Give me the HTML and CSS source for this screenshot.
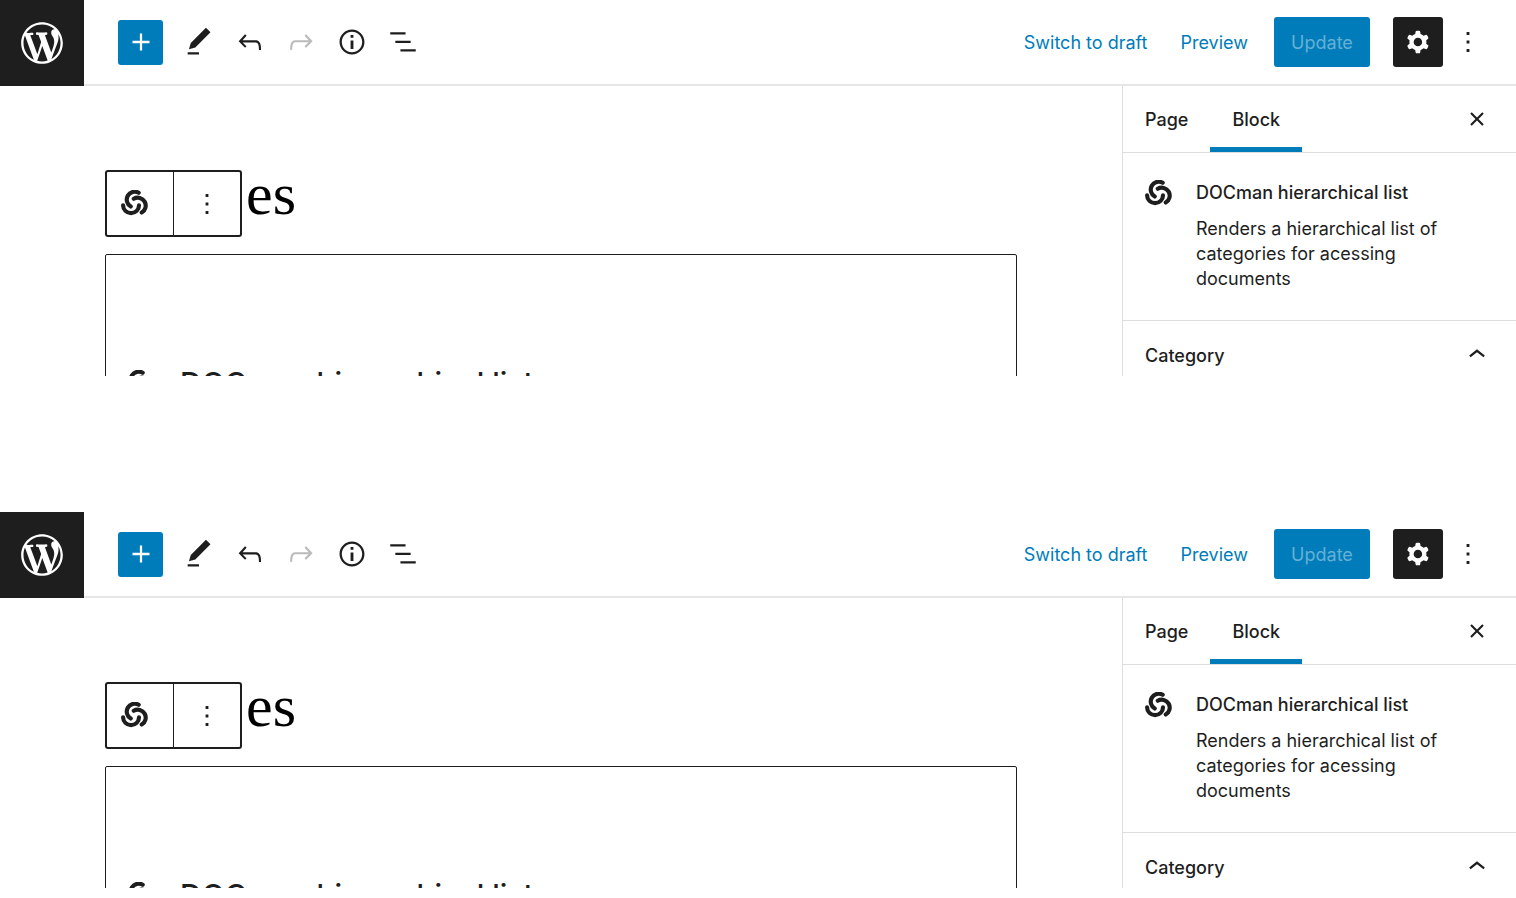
FILE: index.html
```html
<!DOCTYPE html>
<html lang="en">

<head>
    <meta charset="UTF-8">
    <meta name="viewport" content="width=device-width, initial-scale=1.0">
    <title>Edit Page</title>
    <link rel="stylesheet" href="styles.css">
</head>

<body>
    <!-- shared icons -->
    <svg class="sprite" aria-hidden="true">
        <symbol id="wordpress" viewBox="-2 -2 24 24">
            <path d="M20 10c0-5.51-4.49-10-10-10C4.48 0 0 4.49 0 10c0 5.52 4.48 10 10 10 5.51 0 10-4.48 10-10zM7.78 15.37L4.37 6.22c.55-.02 1.17-.08 1.17-.08.5-.06.44-1.13-.06-1.11 0 0-1.45.11-2.37.11-.18 0-.37 0-.58-.01C4.12 2.69 6.87 1.11 10 1.11c2.33 0 4.45.87 6.05 2.34-.68-.11-1.65.39-1.65 1.58 0 .74.45 1.36.9 2.1.35.61.55 1.36.55 2.46 0 1.49-1.4 5-1.4 5l-3.03-8.37c.54-.02.82-.17.82-.17.5-.05.44-1.25-.06-1.22 0 0-1.44.12-2.38.12-.87 0-2.33-.12-2.33-.12-.5-.03-.56 1.2-.06 1.22l.92.08 1.26 3.41zM17.41 10c.24-.64.74-1.87.43-4.25.7 1.29 1.05 2.71 1.05 4.25 0 3.29-1.73 6.24-4.4 7.78.97-2.59 1.94-5.2 2.92-7.78zM6.1 18.09C3.12 16.65 1.11 13.53 1.11 10c0-1.3.23-2.48.72-3.59C3.25 10.3 4.67 14.2 6.1 18.09zm4.03-6.63l2.58 6.98c-.86.29-1.76.45-2.71.45-.79 0-1.57-.11-2.29-.33.81-2.38 1.62-4.74 2.42-7.1z" />
        </symbol>
        <symbol id="plus" viewBox="0 0 24 24">
            <path d="M18 11.2h-5.2V6h-1.6v5.2H6v1.6h5.2V18h1.6v-5.2H18z" />
        </symbol>
        <symbol id="edit" viewBox="0 0 24 24">
            <path d="M20.1 5.1L16.9 2 6.2 12.7l-1.3 4.4 4.5-1.3L20.1 5.1zM4 20.8h8v-1.5H4v1.5z" />
        </symbol>
        <symbol id="undo" viewBox="0 0 24 24">
            <path d="M18.3 11.7c-.6-.6-1.4-.9-2.3-.9H6.7l2.9-3.3-1.1-1-4.5 5L8.5 16l1-1-2.7-2.7H16c.5 0 .9.2 1.3.5 1 1 1 3.4 1 4.5v.3h1.5v-.2c0-1.5 0-4.3-1.5-5.7z" />
        </symbol>
        <symbol id="redo" viewBox="0 0 24 24">
            <path d="M15.6 6.5l-1.1 1 2.9 3.3H8c-.9 0-1.7.3-2.3.9-1.4 1.5-1.4 4.2-1.4 5.6v.2h1.5v-.3c0-1.1 0-3.5 1-4.5.3-.3.7-.5 1.3-.5h9.2L14.5 15l1.1 1.1 4.6-4.6-4.6-5z" />
        </symbol>
        <symbol id="info" viewBox="0 0 24 24">
            <path d="M12 3.2c-4.8 0-8.8 3.9-8.8 8.8 0 4.8 3.9 8.8 8.8 8.8 4.8 0 8.8-3.9 8.8-8.8 0-4.8-4-8.8-8.8-8.8zm0 16c-4 0-7.2-3.3-7.2-7.2C4.8 8 8 4.8 12 4.8s7.2 3.3 7.2 7.2c0 4-3.2 7.2-7.2 7.2zM11 17h2v-6h-2v6zm0-8h2V7h-2v2z" />
        </symbol>
        <symbol id="list" viewBox="0 0 24 24">
            <path d="M13.8 5.2H3v1.5h10.8V5.2zm-3.6 12v1.5H21v-1.5H10.2zm7.2-6H6.6v1.5h10.8v-1.5z" />
        </symbol>
        <symbol id="cog" viewBox="0 0 24 24">
            <path fill-rule="evenodd" d="M10.289 4.836A1 1 0 0111.275 4h1.306a1 1 0 01.987.836l.244 1.466c.787.26 1.503.679 2.108 1.218l1.393-.522a1 1 0 011.216.437l.653 1.13a1 1 0 01-.23 1.273l-1.148.944a6.025 6.025 0 010 2.435l1.149.946a1 1 0 01.23 1.272l-.653 1.13a1 1 0 01-1.216.437l-1.394-.522c-.605.54-1.32.958-2.108 1.218l-.244 1.466a1 1 0 01-.987.836h-1.306a1 1 0 01-.986-.836l-.244-1.466a5.995 5.995 0 01-2.108-1.218l-1.394.522a1 1 0 01-1.217-.436l-.653-1.131a1 1 0 01.23-1.272l1.149-.946a6.026 6.026 0 010-2.435l-1.148-.944a1 1 0 01-.23-1.272l.653-1.131a1 1 0 011.217-.437l1.393.522a5.994 5.994 0 012.108-1.218l.244-1.466zM14.929 12a3 3 0 11-6 0 3 3 0 016 0z" />
        </symbol>
        <symbol id="more" viewBox="0 0 24 24">
            <path d="M13 19h-2v-2h2v2zm0-6h-2v-2h2v2zm0-6h-2V5h2v2z" />
        </symbol>
        <symbol id="close" viewBox="0 0 24 24">
            <path d="M12 13.06l3.712 3.713 1.061-1.06L13.061 12l3.712-3.712-1.06-1.06L12 10.938 8.288 7.227l-1.061 1.06L10.939 12l-3.712 3.712 1.06 1.061L12 13.061z" />
        </symbol>
        <symbol id="chevron" viewBox="0 0 24 24">
            <path d="M6.5 12.4L12 8l5.5 4.4-.9 1.2L12 10l-4.5 3.6-1-1.2z" />
        </symbol>
        <symbol id="docman" viewBox="-39 -39 78 78">
            <g fill="none" stroke="currentColor" stroke-width="12" stroke-linecap="round">
                <path d="M-33 5A23 23 0 0 0 13 5" />
                <path d="M-33 5A23 23 0 0 0 13 5" transform="rotate(120)" />
                <path d="M-33 5A23 23 0 0 0 13 5" transform="rotate(240)" />
            </g>
        </symbol>
    </svg>

    <div class="editor">
        <header class="header">
            <a class="logo" href="#" aria-label="View Pages"><svg><use href="#wordpress" /></svg></a>
            <div class="tools">
                <button class="add" aria-label="Add block"><svg class="icon"><use href="#plus" /></svg></button>
                <button aria-label="Tools"><svg class="icon"><use href="#edit" /></svg></button>
                <button aria-label="Undo"><svg class="icon"><use href="#undo" /></svg></button>
                <button aria-label="Redo" disabled><svg class="icon"><use href="#redo" /></svg></button>
                <button aria-label="Details"><svg class="icon"><use href="#info" /></svg></button>
                <button aria-label="List view"><svg class="icon"><use href="#list" /></svg></button>
            </div>
            <div class="settings">
                <button class="link">Switch to draft</button>
                <button class="link">Preview</button>
                <button class="update" disabled>Update</button>
                <button class="cog" aria-label="Settings"><svg class="icon"><use href="#cog" /></svg></button>
                <button aria-label="Options"><svg class="icon"><use href="#more" /></svg></button>
            </div>
        </header>
        <div class="body">
            <main class="content">
                <div class="title-row">
                    <div class="toolbar">
                        <button aria-label="DOCman hierarchical list"><svg class="docman"><use href="#docman" /></svg></button>
                        <button aria-label="Options"><svg class="icon"><use href="#more" /></svg></button>
                    </div>
                    <h1 class="title">es</h1>
                </div>
                <div class="block">
                    <svg class="docman"><use href="#docman" /></svg>
                    <span>DOCman hierarchical list</span>
                </div>
            </main>
            <aside class="sidebar">
                <div class="tabs">
                    <button class="tab">Page</button>
                    <button class="tab active">Block</button>
                    <button class="close" aria-label="Close settings"><svg class="icon"><use href="#close" /></svg></button>
                </div>
                <div class="card">
                    <svg class="docman"><use href="#docman" /></svg>
                    <div>
                        <h2>DOCman hierarchical list</h2>
                        <p>Renders a hierarchical list of categories for acessing documents</p>
                    </div>
                </div>
                <button class="panel">Category <svg class="icon"><use href="#chevron" /></svg></button>
            </aside>
        </div>
    </div>

    <div class="editor">
        <header class="header">
            <a class="logo" href="#" aria-label="View Pages"><svg><use href="#wordpress" /></svg></a>
            <div class="tools">
                <button class="add" aria-label="Add block"><svg class="icon"><use href="#plus" /></svg></button>
                <button aria-label="Tools"><svg class="icon"><use href="#edit" /></svg></button>
                <button aria-label="Undo"><svg class="icon"><use href="#undo" /></svg></button>
                <button aria-label="Redo" disabled><svg class="icon"><use href="#redo" /></svg></button>
                <button aria-label="Details"><svg class="icon"><use href="#info" /></svg></button>
                <button aria-label="List view"><svg class="icon"><use href="#list" /></svg></button>
            </div>
            <div class="settings">
                <button class="link">Switch to draft</button>
                <button class="link">Preview</button>
                <button class="update" disabled>Update</button>
                <button class="cog" aria-label="Settings"><svg class="icon"><use href="#cog" /></svg></button>
                <button aria-label="Options"><svg class="icon"><use href="#more" /></svg></button>
            </div>
        </header>
        <div class="body">
            <main class="content">
                <div class="title-row">
                    <div class="toolbar">
                        <button aria-label="DOCman hierarchical list"><svg class="docman"><use href="#docman" /></svg></button>
                        <button aria-label="Options"><svg class="icon"><use href="#more" /></svg></button>
                    </div>
                    <h1 class="title">es</h1>
                </div>
                <div class="block">
                    <svg class="docman"><use href="#docman" /></svg>
                    <span>DOCman hierarchical list</span>
                </div>
            </main>
            <aside class="sidebar">
                <div class="tabs">
                    <button class="tab">Page</button>
                    <button class="tab active">Block</button>
                    <button class="close" aria-label="Close settings"><svg class="icon"><use href="#close" /></svg></button>
                </div>
                <div class="card">
                    <svg class="docman"><use href="#docman" /></svg>
                    <div>
                        <h2>DOCman hierarchical list</h2>
                        <p>Renders a hierarchical list of categories for acessing documents</p>
                    </div>
                </div>
                <button class="panel">Category <svg class="icon"><use href="#chevron" /></svg></button>
            </aside>
        </div>
    </div>
</body>

</html>
```
FILE: styles.css
```css
* {
    box-sizing: border-box;
}

body {
    margin: 0;
    background-color: #fff;
    color: #1e1e1e;
    font-family: Inter, "Liberation Sans", sans-serif;
    font-size: 18px;
    line-height: 25px;
}

button {
    display: flex;
    align-items: center;
    justify-content: center;
    padding: 0;
    border: 0;
    background: none;
    color: inherit;
    font: inherit;
    white-space: nowrap;
}

svg {
    flex: none;
    fill: currentColor;
}

.sprite {
    display: none;
}

.icon {
    width: 34px;
    height: 34px;
}

.docman {
    width: 27px;
    height: 27px;
}

/* each editor is a cropped preview */
.editor {
    display: flex;
    flex-direction: column;
    height: 376px;
    overflow: hidden;
}

.editor + .editor {
    margin-top: 136px;
}

.header {
    display: flex;
    flex: none;
    height: 86px;
}

.logo {
    display: flex;
    align-items: center;
    justify-content: center;
    width: 84px;
    background-color: #1e1e1e;
    color: #fff;
}

.logo svg {
    width: 50px;
    height: 50px;
}

.tools,
.settings {
    display: flex;
    align-items: center;
    border-bottom: 2px solid #e6e6e6;
}

.tools {
    flex: 1;
    gap: 17px;
    padding-left: 34px;
}

.tools button:disabled {
    color: #bbb;
}

.add {
    width: 45px;
    height: 45px;
    margin-right: 2px;
    border-radius: 3px;
    background-color: #007cba;
    color: #fff;
}

.settings {
    padding-right: 31px;
}

.link {
    margin-right: 33px;
    color: #007cba;
}

.link + .link {
    margin-right: 26px;
}

.update {
    width: 96px;
    height: 50px;
    margin-right: 23px;
    border-radius: 3px;
    background-color: #007cba;
    color: #66b0d6;
}

.cog {
    width: 50px;
    height: 50px;
    margin-right: 8px;
    border-radius: 3px;
    background-color: #1e1e1e;
    color: #fff;
}

.body {
    display: flex;
    flex: 1;
}

.content {
    flex: 1;
    padding: 84px 105px 0;
}

.title-row {
    display: flex;
    gap: 4px;
}

.toolbar {
    display: flex;
    width: 137px;
    height: 67px;
    border: 2px solid #1e1e1e;
    border-radius: 3px;
}

.toolbar button {
    width: 50%;
}

.toolbar button:first-child {
    padding-right: 11px;
    border-right: 1px solid #1e1e1e;
}

.title {
    margin: 0;
    color: #000;
    font-family: "Liberation Serif", serif;
    font-size: 60px;
    font-weight: 400;
    line-height: 48px;
}

.block {
    display: flex;
    align-items: center;
    gap: 28px;
    height: 200px;
    margin-top: 17px;
    padding: 58px 19px 0;
    border: 1px solid #1e1e1e;
    border-radius: 2px;
    font-size: 30px;
    font-weight: 500;
}

.sidebar {
    width: 394px;
    border-left: 1px solid #ddd;
}

.tabs {
    display: flex;
    height: 67px;
    border-bottom: 1px solid #ddd;
}

.tab {
    padding: 0 22px;
    border-top: 5px solid transparent;
    border-bottom: 5px solid transparent;
    font-weight: 500;
}

.tab.active {
    border-bottom-color: #007cba;
}

.close {
    margin-left: auto;
    margin-right: 22px;
}

.card {
    display: flex;
    gap: 24px;
    padding: 27px 60px 29px 22px;
    border-bottom: 1px solid #ddd;
}

.card h2 {
    margin: 0 0 11px;
    font-size: 18px;
    font-weight: 500;
    line-height: 25px;
    white-space: nowrap;
}

.card p {
    margin: 0;
}

.panel {
    justify-content: space-between;
    width: 100%;
    height: 68px;
    padding: 0 22px;
    font-weight: 500;
}
```
